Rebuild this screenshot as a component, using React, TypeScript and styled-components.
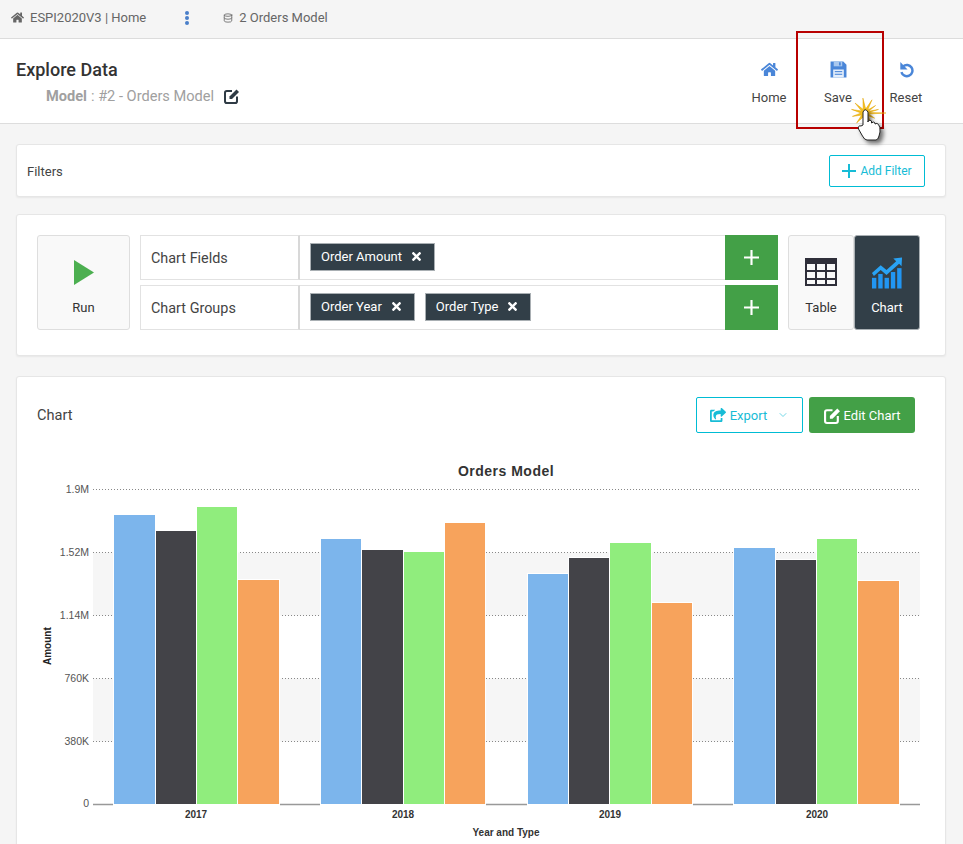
import React from 'react';
import styled, { createGlobalStyle } from 'styled-components';
import { Database, ChevronDown } from 'lucide-react';
import { FaHome, FaShareSquare, FaTimes } from 'react-icons/fa';

const GlobalStyle = createGlobalStyle`
  html, body {
    margin: 0;
    padding: 0;
    height: 844px;
    overflow: hidden;
    background: #f5f5f5;
    font-family: Roboto, "Liberation Sans", sans-serif;
    color: #333;
  }
`;

const Page = styled.div`
  position: relative;
  width: 963px;
  height: 844px;
  overflow: hidden;
`;

const TopBar = styled.div`
  display: flex;
  align-items: center;
  box-sizing: border-box;
  height: 39px;
  padding: 0 0 3px 11px;
  background: #f5f5f5;
  border-bottom: 1px solid #dcdcdc;
  font-size: 13px;
  color: #666;
`;

const Crumb = styled.span`
  display: flex;
  align-items: center;
  gap: 6px;
`;

const Kebab = styled.svg`
  margin: 0 33px 0 38px;
`;

const Header = styled.header`
  display: flex;
  justify-content: space-between;
  height: 84px;
  padding: 0 23px 0 16px;
  background: #fff;
  border-bottom: 1px solid #ddd;
`;

const TitleBlock = styled.div`
  padding-top: 20px;
`;

const Title = styled.h1`
  margin: 0;
  font-size: 18px;
  line-height: 22px;
  font-weight: 500;
  color: #333;
`;

const ModelLine = styled.div`
  display: flex;
  align-items: center;
  margin: 4px 0 0 30px;
  font-size: 14.6px;
  line-height: 22px;
  color: #a0a0a0;

  b {
    font-weight: 700;
    margin-right: 4px;
  }

  svg {
    margin-left: 10px;
    color: #2f3b45;
  }
`;

const Actions = styled.div`
  display: flex;
`;

const ActionButton = styled.div`
  display: flex;
  flex-direction: column;
  align-items: center;
  width: 68px;
  padding-top: 22px;
  font-size: 13px;
  color: #444;

  &:first-child {
    margin-right: 1px;
  }

  svg {
    height: 17px;
    width: 17px;
    margin-bottom: 12px;
    color: #4a86d8;
  }
`;

const Content = styled.main`
  display: flex;
  flex-direction: column;
  padding: 20px 17px 0 16px;
`;

const Card = styled.section<{ $gap?: number }>`
  background: #fff;
  border: 1px solid #e6e6e6;
  border-radius: 3px;
  box-shadow: 0 1px 2px rgba(0, 0, 0, 0.06);
  margin-bottom: ${(p) => p.$gap ?? 0}px;
`;

const FilterCard = styled(Card)`
  display: flex;
  align-items: center;
  justify-content: space-between;
  box-sizing: border-box;
  height: 53px;
  padding: 0 20px 0 10px;
  font-size: 13px;
  color: #444;
`;

const FilterLabel = styled.span`
  padding-top: 2px;
`;

const OutlineButton = styled.button<{ $w: number; $h: number; $size: number }>`
  display: flex;
  align-items: center;
  justify-content: center;
  gap: 4px;
  box-sizing: border-box;
  width: ${(p) => p.$w}px;
  height: ${(p) => p.$h}px;
  padding: 0;
  background: #fff;
  border: 1px solid #00bcd4;
  border-radius: 2px;
  color: #17bcd6;
  font: 400 ${(p) => p.$size}px Roboto, sans-serif;
`;

const BuilderCard = styled(Card)`
  display: flex;
  box-sizing: border-box;
  height: 142px;
  padding: 20px 25px 0 20px;
`;

const ToolBox = styled.div<{ $w: number; $dark?: boolean }>`
  display: flex;
  flex-direction: column;
  align-items: center;
  box-sizing: border-box;
  width: ${(p) => p.$w}px;
  height: 95px;
  padding-top: 21px;
  background: ${(p) => (p.$dark ? '#323f48' : '#f9f9f9')};
  border: 1px solid ${(p) => (p.$dark ? '#aab0b4' : '#dedede')};
  border-radius: 3px;
  color: ${(p) => (p.$dark ? '#fff' : '#333')};
  font-size: 13px;
`;

const ToolIcon = styled.span`
  display: flex;
  align-items: center;
  justify-content: center;
  height: 30px;
  margin-bottom: 13px;
`;

const Rows = styled.div`
  display: flex;
  flex-direction: column;
  gap: 5px;
  width: 638px;
  margin: 0 10px;
`;

const FieldRow = styled.div`
  display: flex;
  height: 45px;
`;

const FieldLabel = styled.div`
  display: flex;
  align-items: center;
  box-sizing: border-box;
  width: 160px;
  padding: 2px 0 0 10px;
  border: 1px solid #e2e2e2;
  border-right: 2px solid #d8d8d8;
  font-size: 14.4px;
  color: #444;
`;

const FieldChips = styled.div`
  flex: 1;
  display: flex;
  align-items: center;
  gap: 10px;
  padding: 0 0 1px 10px;
  border-top: 1px solid #e2e2e2;
  border-bottom: 1px solid #e2e2e2;
`;

const Chip = styled.span`
  display: flex;
  align-items: center;
  gap: 8px;
  box-sizing: border-box;
  height: 28px;
  padding: 0 11px 2px 10px;
  background: #323f48;
  border: 1px solid #a9afb3;
  color: #fff;
  font-size: 13px;

  svg {
    font-size: 13px;
  }
`;

const AddButton = styled.div`
  display: flex;
  align-items: center;
  justify-content: center;
  width: 53px;
  background: #43a047;
  color: #fff;
`;

const ChartCard = styled(Card)`
  height: 520px;
`;

const ChartHeader = styled.div`
  display: flex;
  align-items: center;
  justify-content: space-between;
  padding: 20px 30px 0 20px;
  font-size: 14.6px;
  color: #444;
`;

const ChartButtons = styled.div`
  display: flex;
  gap: 6px;
`;

const GreenButton = styled.button`
  display: flex;
  align-items: center;
  justify-content: center;
  gap: 3px;
  box-sizing: border-box;
  width: 106px;
  height: 36px;
  padding: 0;
  background: #43a047;
  border: 0;
  border-radius: 3px;
  color: #fff;
  font: 400 13px Roboto, sans-serif;
`;

const ChartSvg = styled.svg`
  display: block;
  margin-top: 17px;
  font-family: "Liberation Sans", Arial, sans-serif;
`;

const Highlight = styled.div`
  position: absolute;
  left: 796px;
  top: 31px;
  box-sizing: border-box;
  width: 88px;
  height: 98px;
  border: 2px solid #b80000;
  pointer-events: none;
`;

const Pointer = styled.svg`
  position: absolute;
  left: 850px;
  top: 94px;
  pointer-events: none;
`;

const HandShape = styled.path`
  filter: drop-shadow(3px 3px 2px rgba(0, 0, 0, 0.55));
`;

const COLORS = ['#7cb5ec', '#434348', '#90ed7d', '#f7a35c'];

const GROUPS = [
  { label: '2017', center: 196, xs: [114, 156, 197, 238], end: 279, tops: [515, 531, 507, 580] },
  { label: '2018', center: 403, xs: [321, 362, 404, 445], end: 485, tops: [539, 550, 552, 523] },
  { label: '2019', center: 610, xs: [528, 569, 610, 652], end: 692, tops: [574, 558, 543, 603] },
  { label: '2020', center: 817, xs: [734, 776, 817, 858], end: 899, tops: [548, 560, 539, 581] },
];

const TICKS = [
  { label: '1.9M', y: 489.5 },
  { label: '1.52M', y: 552.5 },
  { label: '1.14M', y: 615.5 },
  { label: '760K', y: 678.5 },
  { label: '380K', y: 741.5 },
];

// spikes of the click burst, [angle, length]
const SPIKES = [
  [0, 21], [28, 11], [58, 12], [95, 12], [130, 13], [165, 13], [195, 14], [225, 14], [262, 15], [298, 15], [325, 13], [345, 14],
];

const burstPoints = SPIKES.flatMap(([angle, len], i) => {
  const a = (angle * Math.PI) / 180;
  const next = (((SPIKES[(i + 1) % SPIKES.length][0] + (i === SPIKES.length - 1 ? 360 : 0) + angle) / 2) * Math.PI) / 180;
  return [
    `${(15 + Math.cos(a) * len).toFixed(1)},${(19 + Math.sin(a) * len).toFixed(1)}`,
    `${(15 + Math.cos(next) * 4).toFixed(1)},${(19 + Math.sin(next) * 4).toFixed(1)}`,
  ];
}).join(' ');

const PlusIcon = ({ size }: { size: number }) => (
  <svg width={size} height={size} viewBox="0 0 14 14">
    <path d="M7 0 V14 M0 7 H14" stroke="currentColor" strokeWidth="2" fill="none" />
  </svg>
);

const EditIcon = ({ size, color }: { size: number; color: string }) => (
  <svg width={size} height={size} viewBox="0 0 16 16" style={{ color }}>
    <path d="M8 3 H2.800 Q1 3 1 4.800 V13.200 Q1 15 2.800 15 H11.200 Q13 15 13 13.200 V8.500" fill="none" stroke="currentColor" strokeWidth="2" />
    <path d="M5.500 8.500 L12.500 1.500 L15 4 L8 11 H5.500 Z" fill="currentColor" />
  </svg>
);

const SaveIcon = () => (
  <svg viewBox="0 0 16 16">
    <path d="M0.500 0.500 H12.500 L15.500 3.500 V15.500 H0.500 Z" fill="currentColor" />
    <rect x="3.500" y="0.500" width="8" height="4.500" fill="#a9c8ef" />
    <rect x="8.500" y="1.200" width="1.600" height="3" fill="currentColor" />
    <rect x="3" y="8" width="10" height="7.500" fill="#e4eefb" />
    <rect x="4.500" y="9.500" width="7" height="1" fill="currentColor" />
    <rect x="4.500" y="12" width="7" height="1" fill="currentColor" />
  </svg>
);

const ResetIcon = () => (
  <svg viewBox="0 0 16 16">
    <path d="M4.800 5 A5.300 5.300 0 1 1 3.200 10.500" fill="none" stroke="currentColor" strokeWidth="2.300" />
    <path d="M2.200 1 V8 H9 Z" fill="currentColor" />
  </svg>
);

const TableIcon = () => (
  <svg width="32" height="28" viewBox="0 0 32 28" fill="#2f2f3a">
    <path fillRule="evenodd" d="M0 0 H32 V28 H0 Z M2 6 V12 H10 V6 Z M12 6 V12 H20 V6 Z M22 6 V12 H30 V6 Z M2 14 V20 H10 V14 Z M12 14 V20 H20 V14 Z M22 14 V20 H30 V14 Z M2 22 V26 H10 V22 Z M12 22 V26 H20 V22 Z M22 22 V26 H30 V22 Z" />
  </svg>
);

const ChartIcon = () => (
  <svg width="32" height="33" viewBox="0 0 33 33">
    <path d="M1 17 L10 9 L16 14 L26 5 L23 2 L32 1 L31.500 10 L29 7.500 L16 19 L10 14 L3 20 Z" fill="#29a3f5" />
    <rect x="1" y="22" width="4.500" height="11" fill="#2196f3" />
    <rect x="7.500" y="18" width="4.500" height="15" fill="#2196f3" />
    <rect x="14" y="22" width="4.500" height="11" fill="#2196f3" />
    <rect x="20.500" y="16" width="4.500" height="17" fill="#2196f3" />
    <rect x="27" y="12" width="4.500" height="21" fill="#2196f3" />
  </svg>
);

const OrdersChart = () => (
  <ChartSvg width="928" height="394" viewBox="17 450 928 394">
    <rect x="93" y="552.500" width="827" height="63" fill="#f6f6f6" />
    <rect x="93" y="678.500" width="827" height="63" fill="#f6f6f6" />
    {TICKS.map((t) => (
      <g key={t.label}>
        <line x1="93" x2="920" y1={t.y} y2={t.y} stroke="#888" strokeDasharray="1 2" />
        <text x="89" y={t.y + 3} textAnchor="end" fontSize="10.500" fill="#555">{t.label}</text>
      </g>
    ))}
    <line x1="93" x2="920" y1="804.500" y2="804.500" stroke="#999" strokeWidth="1.500" />
    <text x="89" y="807" textAnchor="end" fontSize="10.500" fill="#555">0</text>
    {GROUPS.map((g) => (
      <g key={g.label}>
        {g.xs.map((x, i) => {
          const right = i < 3 ? g.xs[i + 1] - 1 : g.end;
          return (
            <g key={x}>
              <rect x={x - 1} y={g.tops[i] - 1} width={right - x + 2} height={807 - g.tops[i]} fill="#fff" />
              <rect x={x} y={g.tops[i]} width={right - x} height={804 - g.tops[i]} fill={COLORS[i]} />
            </g>
          );
        })}
        <text x={g.center} y="818" textAnchor="middle" fontSize="10" fontWeight="700" fill="#333">{g.label}</text>
      </g>
    ))}
    <text x="506" y="476" textAnchor="middle" fontSize="14" fontWeight="700" fill="#333" letterSpacing="0.5">Orders Model</text>
    <text transform="translate(51 665) rotate(-90)" fontSize="10" fontWeight="700" fill="#222">Amount</text>
    <text x="506" y="836" textAnchor="middle" fontSize="10" fontWeight="700" fill="#333">Year and Type</text>
  </ChartSvg>
);

const App: React.FC = () => (
  <Page>
    <GlobalStyle />
    <TopBar>
      <Crumb><FaHome size={13} /> ESPI2020V3 | Home</Crumb>
      <Kebab width="6" height="14" viewBox="0 0 6 14" fill="#4a7fc9">
        <circle cx="3" cy="2" r="2" />
        <circle cx="3" cy="7" r="2" />
        <circle cx="3" cy="12" r="2" />
      </Kebab>
      <Crumb><Database size={10} /> 2 Orders Model</Crumb>
    </TopBar>

    <Header>
      <TitleBlock>
        <Title>Explore Data</Title>
        <ModelLine><b>Model</b> : #2 - Orders Model <EditIcon size={16} color="#2f3b45" /></ModelLine>
      </TitleBlock>
      <Actions>
        <ActionButton><FaHome />Home</ActionButton>
        <ActionButton><SaveIcon />Save</ActionButton>
        <ActionButton><ResetIcon />Reset</ActionButton>
      </Actions>
    </Header>

    <Content>
      <FilterCard $gap={17}>
        <FilterLabel>Filters</FilterLabel>
        <OutlineButton $w={96} $h={32} $size={12}><PlusIcon size={14} /> Add Filter</OutlineButton>
      </FilterCard>

      <BuilderCard $gap={20}>
        <ToolBox $w={93}>
          <ToolIcon>
            <svg width="20" height="25" viewBox="0 0 20 25"><path d="M0 0 L20 12.500 L0 25 Z" fill="#4caf50" /></svg>
          </ToolIcon>
          Run
        </ToolBox>
        <Rows>
          <FieldRow>
            <FieldLabel>Chart Fields</FieldLabel>
            <FieldChips>
              <Chip>Order Amount <FaTimes /></Chip>
            </FieldChips>
            <AddButton><PlusIcon size={15} /></AddButton>
          </FieldRow>
          <FieldRow>
            <FieldLabel>Chart Groups</FieldLabel>
            <FieldChips>
              <Chip>Order Year <FaTimes /></Chip>
              <Chip>Order Type <FaTimes /></Chip>
            </FieldChips>
            <AddButton><PlusIcon size={15} /></AddButton>
          </FieldRow>
        </Rows>
        <ToolBox $w={66}>
          <ToolIcon><TableIcon /></ToolIcon>
          Table
        </ToolBox>
        <ToolBox $w={66} $dark>
          <ToolIcon><ChartIcon /></ToolIcon>
          Chart
        </ToolBox>
      </BuilderCard>

      <ChartCard>
        <ChartHeader>
          Chart
          <ChartButtons>
            <OutlineButton $w={107} $h={36} $size={13}>
              <FaShareSquare size={16} /> Export
              <ChevronDown size={12} strokeWidth={1.5} style={{ marginLeft: 6, opacity: 0.8 }} />
            </OutlineButton>
            <GreenButton><EditIcon size={17} color="#fff" /> Edit Chart</GreenButton>
          </ChartButtons>
        </ChartHeader>
        <OrdersChart />
      </ChartCard>
    </Content>

    <Highlight />
    <Pointer width="44" height="56" viewBox="0 0 44 56">
      <polygon points={burstPoints} fill="#f6c21c" stroke="#e0a100" strokeWidth="0.500" />
      <HandShape d="M13 31 L13 18 Q15 13.500 18 18 L18 28 L18 27 Q20 25.500 21.500 27 L21.500 29 Q23.500 27 25 29 L25 30 Q27 28.500 28.500 30.500 Q30.500 33 30 38 L29 42 Q28 46 26 46 L17 46 Q14.500 46 12.500 42 L8.500 35 Q8 31 11 32 Z" fill="#fff" stroke="#222" strokeWidth="1" strokeLinejoin="round" />
    </Pointer>
  </Page>
);

export default App;
